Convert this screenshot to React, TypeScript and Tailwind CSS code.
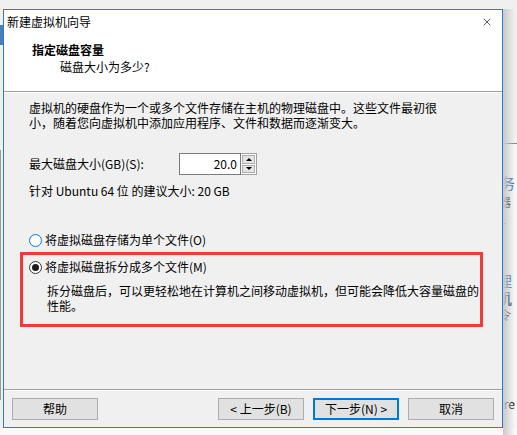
import { X } from "lucide-react"

function Radio({ checked, focus }: { checked?: boolean; focus?: boolean }) {
  return (
    <span
      className={`flex h-[13px] w-[13px] shrink-0 items-center justify-center rounded-full border bg-white ${
        focus ? "border-[#0078d7]" : "border-[#333333]"
      }`}
    >
      {checked && <span className="h-[7px] w-[7px] rounded-full bg-[#1a1a1a]" />}
    </span>
  )
}

function Button({ label, primary }: { label: string; primary?: boolean }) {
  return (
    <div
      className={`flex h-[22px] w-[86px] items-center justify-center bg-[#e1e1e1] ${
        primary ? "border-2 border-[#0078d7]" : "border border-[#adadad]"
      }`}
    >
      {label}
    </div>
  )
}

export default function App() {
  return (
    <div className="relative h-[435px] w-[517px] overflow-hidden bg-[#f0f0f0] font-['Noto_Sans_CJK_SC',sans-serif] text-[12px] text-black">
      {/* windows behind the wizard */}
      <div className="absolute left-[490px] top-[143px] h-[300px] w-[40px] border-t border-[#5b8fd0] bg-[#f7f7f7]" />
      <div className="absolute left-[500px] top-[174px] text-[15px] leading-[17px] text-[#2f65a8]">务</div>
      <div className="absolute left-[499px] top-[194px] leading-[15px]">器_</div>
      <div className="absolute left-[497px] top-[272px] text-[15px] leading-[17px] text-[#2f65a8]">理机</div>
      <div className="absolute left-[499px] top-[292px] leading-[15px]">机令</div>
      <div className="absolute left-[497px] top-[396px] leading-[15px]">are</div>
      <div className="absolute left-[0px] top-[150px] h-[250px] w-[2px] border-l border-[#9a9a9a]" />
      <div className="absolute left-[0px] top-[428px] h-[10px] w-[517px] bg-[#fafafa]" />
      <div className="absolute left-[503px] top-[9px] h-[426px] w-[12px] bg-gradient-to-r from-[#c9c9c9] to-transparent" />
      <div className="absolute left-[0px] top-[25px] h-[20px] w-[3px] bg-[#4a7fb8]" />

      {/* wizard window */}
      <div className="absolute left-[3px] top-[9px] flex h-[419px] w-[500px] flex-col border border-[#2b7bd0] bg-[#f0f0f0]">
        <div className="flex h-[24px] items-center justify-between bg-white pl-[3px] pr-[9px]">
          <span className="leading-[16px]">新建虚拟机向导</span>
          <X className="h-[12px] w-[12px]" strokeWidth={1.3} />
        </div>

        <div className="h-[58px] border-b border-[#a0a0a0] bg-white pl-[28px] pt-[8px]">
          <div className="font-bold leading-[16px]">指定磁盘容量</div>
          <div className="mt-[1px] pl-[28px] leading-[16px]">磁盘大小为多少?</div>
        </div>

        <div className="flex-1 border-t border-white pl-[25px] pt-[7px]">
          <p className="leading-[15px]">
            虚拟机的硬盘作为一个或多个文件存储在主机的物理磁盘中。这些文件最初很
            <br />
            小，随着您向虚拟机中添加应用程序、文件和数据而逐渐变大。
          </p>

          <div className="mt-[23px] flex h-[22px] items-center">
            <span className="w-[150px]">最大磁盘大小(GB)(S):</span>
            <div className="flex h-[22px]">
              <div className="flex h-full w-[62px] items-center justify-end border border-[#7a7a7a] bg-white pr-[3px]">
                20.0
              </div>
              <div className="flex w-[16px] flex-col gap-[1px] border-y border-r border-[#a0a0a0] bg-white p-[1px]">
                <div className="flex flex-1 items-center justify-center border border-[#adadad] bg-[#e5e5e5]">
                  <span className="h-0 w-0 border-x-[3px] border-b-[3px] border-x-transparent border-b-black" />
                </div>
                <div className="flex flex-1 items-center justify-center border border-[#adadad] bg-[#e5e5e5]">
                  <span className="h-0 w-0 border-x-[3px] border-t-[3px] border-x-transparent border-t-black" />
                </div>
              </div>
            </div>
          </div>

          <div className="mt-[8px] leading-[15px]">针对 Ubuntu 64 位 的建议大小: 20 GB</div>

          <div className="mt-[34px] flex h-[16px] items-center gap-[3px]">
            <Radio focus />
            <span className="leading-[16px]">将虚拟磁盘存储为单个文件(O)</span>
          </div>

          <div className="-ml-[9px] mt-[4px] w-[463px] border-[3px] border-[#f23a3a] pb-[11px] pl-[6px] pt-[4px]">
            <div className="flex h-[16px] items-center gap-[3px]">
              <Radio checked />
              <span className="leading-[16px]">将虚拟磁盘拆分成多个文件(M)</span>
            </div>
            <p className="mt-[8px] pl-[18px] leading-[15px]">
              拆分磁盘后，可以更轻松地在计算机之间移动虚拟机，但可能会降低大容量磁盘的
              <br />
              性能。
            </p>
          </div>
        </div>

        <div className="h-[38px] border-t border-[#a0a0a0]">
          <div className="flex h-full items-start justify-between border-t border-white px-[8px] pt-[7px]">
            <Button label="帮助" />
            <div className="flex gap-[9px]">
              <Button label="< 上一步(B)" />
              <Button label="下一步(N) >" primary />
              <Button label="取消" />
            </div>
          </div>
        </div>
      </div>
    </div>
  )
}
